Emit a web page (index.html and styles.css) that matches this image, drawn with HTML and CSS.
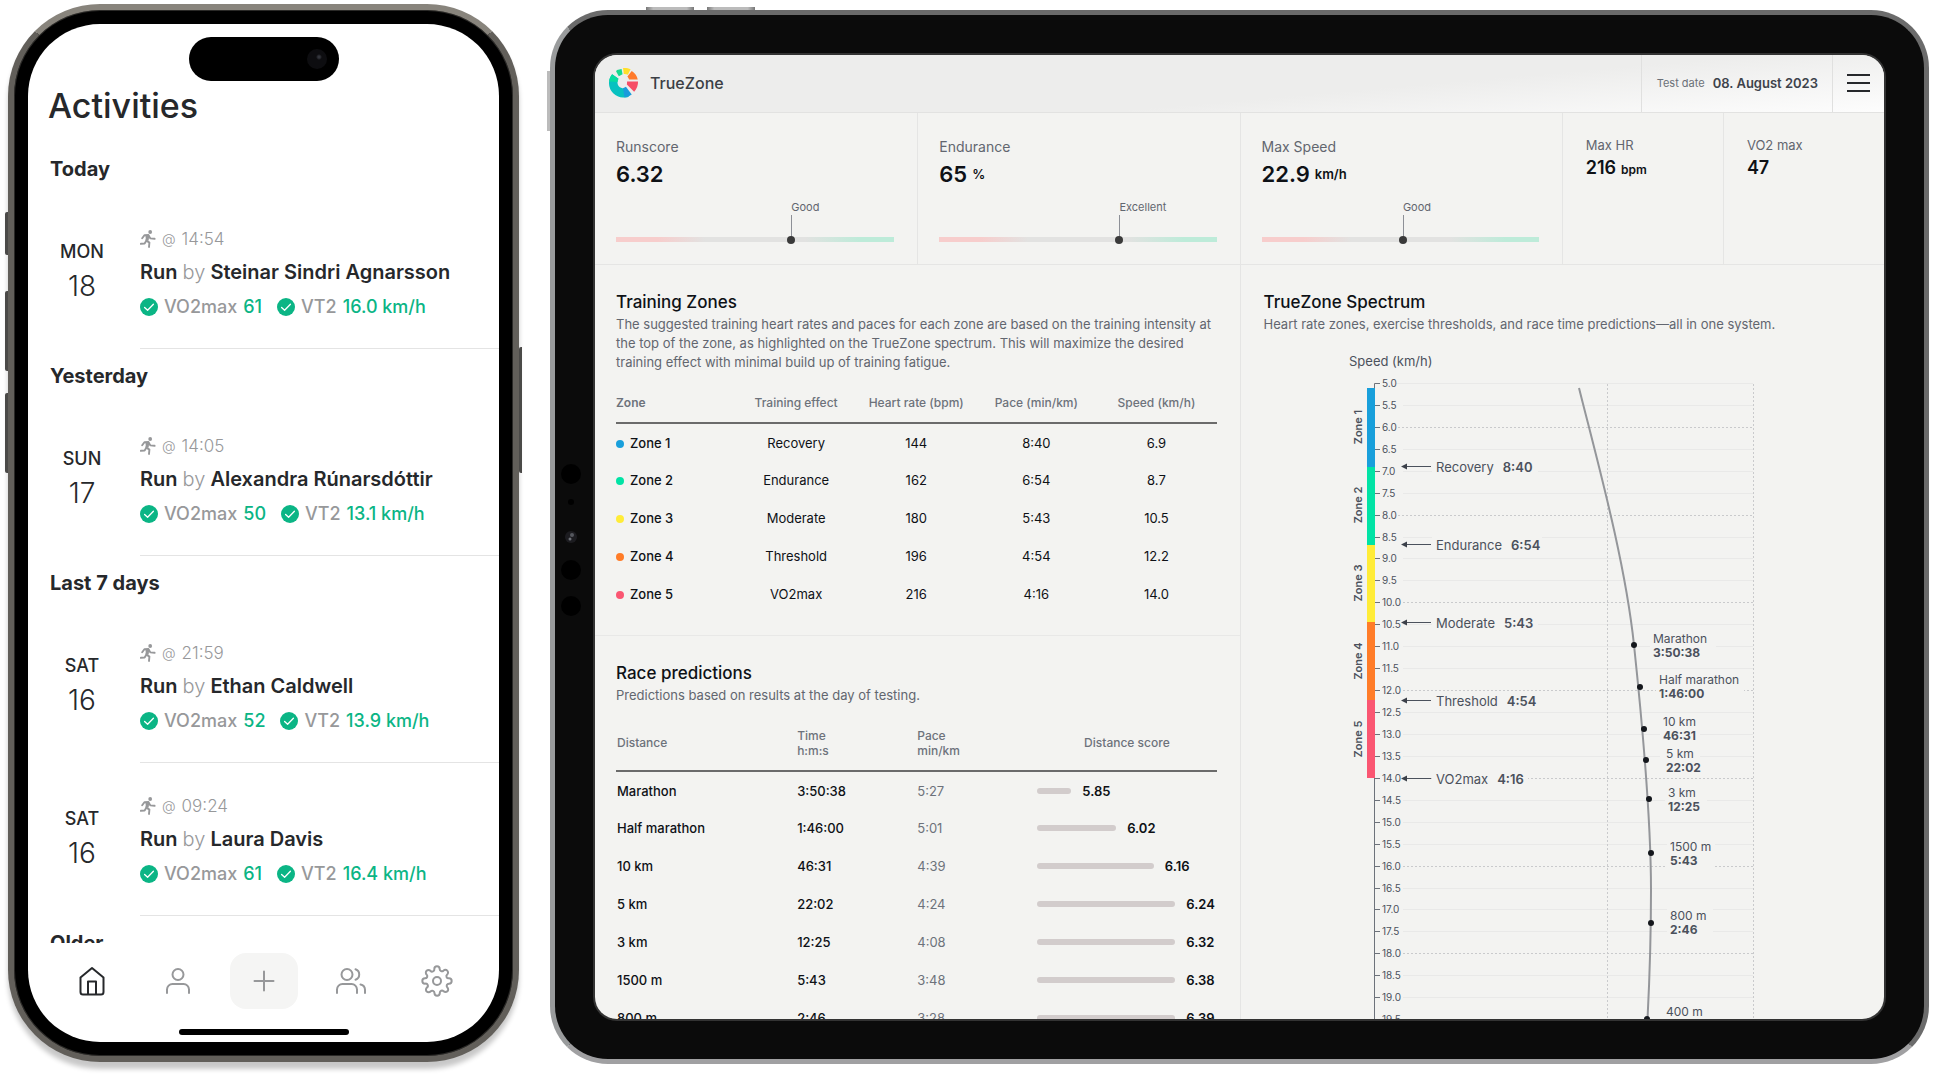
FILE: index.html
```html
<!DOCTYPE html>
<html lang="en">
<head>
<meta charset="utf-8">
<title>TrueZone</title>
<link rel="stylesheet" href="styles.css">
</head>
<body>
<svg class="defs" aria-hidden="true">
  <symbol id="runner" viewBox="0 0 16 18"><circle cx="10.2" cy="2" r="1.9" fill="currentColor"/><path d="M2.2 8.2 4.4 5.2 8.4 5 6.2 10.4 9.4 12.6 9 17M8.6 5.6 10.4 8.4 14.6 8.8M6 11.2 4.6 13.6.8 13.8" fill="none" stroke="currentColor" stroke-width="1.9" stroke-linecap="round" stroke-linejoin="round"/><path d="M5.4 5.2 9.4 5 8.6 10.4 6 10.6Z" fill="currentColor"/></symbol>
  <symbol id="check" viewBox="0 0 18 18"><circle cx="9" cy="9" r="9" fill="#0bb585"/><path d="M4.6 9.4 7.6 12.2 13.4 6.2" fill="none" stroke="#fff" stroke-width="1.3" stroke-linecap="round" stroke-linejoin="round"/></symbol>
</svg>

<main class="phone">
  <i class="key key-mute"></i><i class="key key-up"></i><i class="key key-down"></i><i class="key key-power"></i>
  <div class="phone-screen">
    <div class="island"><i class="lens"></i></div>
    <div class="feed">
      <h1>Activities</h1>
      <h2>Today</h2>
      <article class="entry">
        <div class="date"><b>MON</b><span>18</span></div>
        <div class="info">
          <p class="time"><svg class="run"><use href="#runner"/></svg><small>@</small> 14:54</p>
          <p class="name">Run <span>by</span> Steinar Sindri Agnarsson</p>
          <p class="metrics"><svg class="tick"><use href="#check"/></svg>VO2max <b>61</b><svg class="tick"><use href="#check"/></svg>VT2 <b>16.0 km/h</b></p>
        </div>
      </article>
      <h2>Yesterday</h2>
      <article class="entry">
        <div class="date"><b>SUN</b><span>17</span></div>
        <div class="info">
          <p class="time"><svg class="run"><use href="#runner"/></svg><small>@</small> 14:05</p>
          <p class="name">Run <span>by</span> Alexandra Rúnarsdóttir</p>
          <p class="metrics"><svg class="tick"><use href="#check"/></svg>VO2max <b>50</b><svg class="tick"><use href="#check"/></svg>VT2 <b>13.1 km/h</b></p>
        </div>
      </article>
      <h2>Last 7 days</h2>
      <article class="entry">
        <div class="date"><b>SAT</b><span>16</span></div>
        <div class="info">
          <p class="time"><svg class="run"><use href="#runner"/></svg><small>@</small> 21:59</p>
          <p class="name">Run <span>by</span> Ethan Caldwell</p>
          <p class="metrics"><svg class="tick"><use href="#check"/></svg>VO2max <b>52</b><svg class="tick"><use href="#check"/></svg>VT2 <b>13.9 km/h</b></p>
        </div>
      </article>
      <article class="entry">
        <div class="date"><b>SAT</b><span>16</span></div>
        <div class="info">
          <p class="time"><svg class="run"><use href="#runner"/></svg><small>@</small> 09:24</p>
          <p class="name">Run <span>by</span> Laura Davis</p>
          <p class="metrics"><svg class="tick"><use href="#check"/></svg>VO2max <b>61</b><svg class="tick"><use href="#check"/></svg>VT2 <b>16.4 km/h</b></p>
        </div>
      </article>
      <h2>Older</h2>
    </div>
    <nav class="tabs">
      <a class="active" href="#home" aria-label="Home"><svg viewBox="0 0 32 32"><path d="M4.5 12.5 16 3l11.500 9.500V27a2.500 2.500 0 0 1-2.500 2.500H7A2.500 2.500 0 0 1 4.500 27ZM12 29.500V16.500h8v13"/></svg></a>
      <a href="#profile" aria-label="Profile"><svg viewBox="0 0 32 32"><circle cx="16" cy="9.500" r="5.500"/><path d="M5 28v-3.500a5.500 5.500 0 0 1 5.500-5.500h11a5.500 5.500 0 0 1 5.500 5.500V28"/></svg></a>
      <button type="button" aria-label="Add activity"><svg viewBox="0 0 32 32"><path d="M16 6.500v19M6.500 16h19"/></svg></button>
      <a href="#groups" aria-label="Groups"><svg viewBox="0 0 32 32"><circle cx="12" cy="9.500" r="5.500"/><path d="M2 28v-3.500a5.500 5.500 0 0 1 5.500-5.500h9a5.500 5.500 0 0 1 5.500 5.500V28M20.500 4.300a5.500 5.500 0 0 1 0 10.400M25.500 19.400a5.500 5.500 0 0 1 4.500 5.300V28"/></svg></a>
      <a href="#settings" aria-label="Settings"><svg viewBox="0 0 24 24"><circle class="gear" cx="12" cy="12" r="3"/><path class="gear" d="M19.400 15a1.650 1.650 0 0 0 .33 1.820l.06.06a2 2 0 1 1-2.830 2.830l-.06-.06a1.650 1.650 0 0 0-2.800 1.180V21a2 2 0 0 1-4 0v-.09a1.650 1.650 0 0 0-2.900-1.080l-.06.06a2 2 0 1 1-2.830-2.830l.06-.06A1.650 1.650 0 0 0 3.090 14H3a2 2 0 0 1 0-4h.09a1.650 1.650 0 0 0 1.180-2.800l-.06-.06a2 2 0 1 1 2.830-2.830l.06.06A1.650 1.650 0 0 0 10 3.090V3a2 2 0 0 1 4 0v.09a1.650 1.650 0 0 0 2.800 1.180l.06-.06a2 2 0 1 1 2.830 2.830l-.06.06A1.650 1.650 0 0 0 20.910 10H21a2 2 0 0 1 0 4h-.09a1.650 1.650 0 0 0-1.510 1Z"/></svg></a>
    </nav>
    <div class="home-bar"></div>
  </div>
</main>

<section class="tablet">
  <i class="pad-key pad-a"></i><i class="pad-key pad-b"></i><i class="pad-key pad-c"></i>
  <svg class="sensors" viewBox="0 0 24 160"><g fill="#000"><circle cx="12" cy="18" r="10"/><circle cx="12" cy="46" r="3"/><circle cx="12" cy="114" r="10"/><circle cx="12" cy="150" r="10"/></g><circle cx="12" cy="81" r="6" fill="#1c1c20"/><circle cx="13" cy="79" r="2" fill="#55585e"/><circle cx="11" cy="83" r="1.500" fill="#6c6f75"/></svg>
  <div class="pad-screen">
    <header class="bar">
      <div class="brand">
        <svg class="logo" viewBox="0 0 32 32">
          <path d="M4.300 7.500A15 15 0 0 0 1 17a15 15 0 0 0 14.500 14.500c2.500 0 4-.2 6-.9L16.500 22C12 22 9.600 19 9.800 15.500c.1-1.500.5-2.500 1-3.500Z" fill="#08c1c0"/>
          <path d="M4.300 7.500C2.500 9.600 1.400 12 1.100 15l8.700.5c.1-1.500.5-2.500 1-3.500Z" fill="#08dba0"/>
          <path d="M15.500 21.900 18.500 20.500 24.500 28.500c-1.500 1.200-4 2.500-7.500 2.900Z" fill="#1a9bdc"/>
          <path d="M9.300 3 14 2l1 5.500-3.800 2L8.300 4.500Z" fill="#16d98f"/>
          <path d="M15.500 1c3-.3 5.500.2 7.800 1.300L20.500 8c-1.500-.8-2.500-.9-4.200-.8Z" fill="#ffdf2b"/>
          <path d="M24.500 4c3.500 2.200 5.500 5.300 6.200 8.800l-9 .2c-.2-1.300-.8-2.300-1.700-3.300Z" fill="#ff7a2c"/>
          <path d="M19.700 15H31c.1 4-1.300 7.700-4 10.500L19.500 18Z" fill="#f64d66"/>
        </svg>
        <span>TrueZone</span>
      </div>
      <div class="test-date"><span>Test date</span><time datetime="2023-08-08">08. August 2023</time></div>
      <button class="menu" type="button" aria-label="Menu"><i></i><i></i><i></i></button>
    </header>

    <div class="stats">
      <div class="stat"><p>Runscore</p><strong>6.32</strong>
        <div class="gauge"><div class="mark" style="left:63%"><span>Good</span></div></div></div>
      <div class="stat"><p>Endurance</p><strong>65 <small>%</small></strong>
        <div class="gauge"><div class="mark" style="left:65%"><span>Excellent</span></div></div></div>
      <div class="stat"><p>Max Speed</p><strong>22.9 <small>km/h</small></strong>
        <div class="gauge"><div class="mark" style="left:51%"><span>Good</span></div></div></div>
      <div class="stat compact"><p>Max HR</p><strong>216 <small>bpm</small></strong></div>
      <div class="stat compact"><p>VO2 max</p><strong>47</strong></div>
    </div>

    <div class="panels">
      <div class="left">
        <section class="panel">
          <h3>Training Zones</h3>
          <p class="lead">The suggested training heart rates and paces for each zone are based on the training intensity at the top of the zone, as highlighted on the TrueZone spectrum. This will maximize the desired training effect with minimal build up of training fatigue.</p>
          <table class="zones">
            <thead><tr><th>Zone</th><th>Training effect</th><th>Heart rate (bpm)</th><th>Pace (min/km)</th><th>Speed (km/h)</th></tr></thead>
            <tbody>
              <tr><td><i class="dot z1"></i>Zone 1</td><td>Recovery</td><td>144</td><td>8:40</td><td>6.9</td></tr>
              <tr><td><i class="dot z2"></i>Zone 2</td><td>Endurance</td><td>162</td><td>6:54</td><td>8.7</td></tr>
              <tr><td><i class="dot z3"></i>Zone 3</td><td>Moderate</td><td>180</td><td>5:43</td><td>10.5</td></tr>
              <tr><td><i class="dot z4"></i>Zone 4</td><td>Threshold</td><td>196</td><td>4:54</td><td>12.2</td></tr>
              <tr><td><i class="dot z5"></i>Zone 5</td><td>VO2max</td><td>216</td><td>4:16</td><td>14.0</td></tr>
            </tbody>
          </table>
        </section>
        <section class="panel">
          <h3>Race predictions</h3>
          <p class="lead">Predictions based on results at the day of testing.</p>
          <table class="races">
            <colgroup><col class="w30"><col class="w20"><col class="w20"><col class="w30"></colgroup>
            <thead><tr><th>Distance</th><th>Time<br>h:m:s</th><th>Pace<br>min/km</th><th>Distance score</th></tr></thead>
            <tbody>
              <tr><td>Marathon</td><td>3:50:38</td><td>5:27</td><td><div class="score"><i style="width:19%"></i>5.85</div></td></tr>
              <tr><td>Half marathon</td><td>1:46:00</td><td>5:01</td><td><div class="score"><i style="width:44%"></i>6.02</div></td></tr>
              <tr><td>10 km</td><td>46:31</td><td>4:39</td><td><div class="score"><i style="width:65%"></i>6.16</div></td></tr>
              <tr><td>5 km</td><td>22:02</td><td>4:24</td><td><div class="score"><i style="width:77%"></i>6.24</div></td></tr>
              <tr><td>3 km</td><td>12:25</td><td>4:08</td><td><div class="score"><i style="width:77%"></i>6.32</div></td></tr>
              <tr><td>1500 m</td><td>5:43</td><td>3:48</td><td><div class="score"><i style="width:77%"></i>6.38</div></td></tr>
              <tr><td>800 m</td><td>2:46</td><td>3:28</td><td><div class="score"><i style="width:77%"></i>6.39</div></td></tr>
            </tbody>
          </table>
        </section>
      </div>

      <section class="panel right">
        <h3>TrueZone Spectrum</h3>
        <p class="lead">Heart rate zones, exercise thresholds, and race time predictions—all in one system.</p>
        <svg class="chart" viewBox="1340 346 430 700" role="img" aria-label="Speed spectrum">
          <text class="axis-title" x="1349" y="366">Speed (km/h)</text>
          <path class="grid" d="M1396 383.500H1753M1403 405.500H1753M1403 449.500H1753M1403 471.500H1753M1403 493.500H1753M1403 537.500H1753M1403 558.500H1753M1403 580.500H1753M1403 624.500H1753M1403 646.500H1753M1403 668.500H1753M1403 712.500H1753M1403 734.500H1753M1403 756.500H1753M1403 800.500H1753M1403 822.500H1753M1403 844.500H1753M1403 888.500H1753M1403 909.500H1753M1403 931.500H1753M1403 975.500H1753M1403 997.500H1753M1403 1019.500H1753"/>
          <path class="dashed" d="M1398 427.500H1753M1398 515.500H1753M1403 602.500H1753M1403 690.500H1753M1403 778.500H1753M1403 866.500H1753M1403 953.500H1753M1607.500 384V1046M1753.500 384V1046"/>
          <path class="axis" d="M1374.500 1046V383.500H1380M1375 405.500h5M1375 427.500h5M1375 449.500h5M1375 471.500h5M1375 493.500h5M1375 515.500h5M1375 537.500h5M1375 558.500h5M1375 580.500h5M1375 602.500h5M1375 624.500h5M1375 646.500h5M1375 668.500h5M1375 690.500h5M1375 712.500h5M1375 734.500h5M1375 756.500h5M1375 778.500h5M1375 800.500h5M1375 822.500h5M1375 844.500h5M1375 866.500h5M1375 888.500h5M1375 909.500h5M1375 931.500h5M1375 953.500h5M1375 975.500h5M1375 997.500h5M1375 1019.500h5"/>
          <g class="scale">
            <text x="1382" y="387">5.0</text><text x="1382" y="409">5.5</text><text x="1382" y="431">6.0</text><text x="1382" y="453">6.5</text><text x="1382" y="475">7.0</text><text x="1382" y="497">7.5</text><text x="1382" y="519">8.0</text><text x="1382" y="541">8.5</text><text x="1382" y="562">9.0</text><text x="1382" y="584">9.5</text><text x="1382" y="606">10.0</text><text x="1382" y="628">10.5</text><text x="1382" y="650">11.0</text><text x="1382" y="672">11.5</text><text x="1382" y="694">12.0</text><text x="1382" y="716">12.5</text><text x="1382" y="738">13.0</text><text x="1382" y="760">13.5</text><text x="1382" y="782">14.0</text><text x="1382" y="804">14.5</text><text x="1382" y="826">15.0</text><text x="1382" y="848">15.5</text><text x="1382" y="870">16.0</text><text x="1382" y="892">16.5</text><text x="1382" y="913">17.0</text><text x="1382" y="935">17.5</text><text x="1382" y="957">18.0</text><text x="1382" y="979">18.5</text><text x="1382" y="1001">19.0</text><text x="1382" y="1023">19.5</text>
          </g>
          <rect x="1367" y="388" width="8" height="79" fill="#189fdb"/>
          <rect x="1367" y="467" width="8" height="78" fill="#00e3a5"/>
          <rect x="1367" y="545" width="8" height="77" fill="#ffec38"/>
          <rect x="1367" y="622" width="8" height="78" fill="#ff7c28"/>
          <rect x="1367" y="700" width="8" height="78" fill="#fa5672"/>
          <g class="zone-names">
            <text transform="translate(1362 427) rotate(-90)">Zone 1</text>
            <text transform="translate(1362 505) rotate(-90)">Zone 2</text>
            <text transform="translate(1362 583) rotate(-90)">Zone 3</text>
            <text transform="translate(1362 661) rotate(-90)">Zone 4</text>
            <text transform="translate(1362 739) rotate(-90)">Zone 5</text>
          </g>
          <path class="knockout" d="M1432 458h106v18h-106zM1432 536h110v18h-110zM1432 614h106v18h-106zM1432 692h108v18h-108zM1432 770h96v18h-96zM1650 630h66v30h-66zM1656 672h88v30h-88zM1660 713h40v62h-40zM1665 784h42v30h-42zM1667 838h48v30h-48zM1667 908h46v30h-46zM1663 1005h46v30h-46z"/>
          <path class="arrow" d="M1406 466.500H1431M1406 544.500H1431M1406 622.500H1431M1406 700.500H1431M1406 778.500H1431"/>
          <path class="tip" d="M1401 466.500l6-3v6zM1401 544.500l6-3v6zM1401 622.500l6-3v6zM1401 700.500l6-3v6zM1401 778.500l6-3v6z"/>
          <g class="effects">
            <text x="1436" y="472">Recovery<tspan dx="9">8:40</tspan></text>
            <text x="1436" y="550">Endurance<tspan dx="9">6:54</tspan></text>
            <text x="1436" y="628">Moderate<tspan dx="9">5:43</tspan></text>
            <text x="1436" y="706">Threshold<tspan dx="9">4:54</tspan></text>
            <text x="1436" y="784">VO2max<tspan dx="9">4:16</tspan></text>
          </g>
          <path class="curve" d="M1579 388C1597 460 1625 560 1634 645C1643 730 1651 820 1651 890C1651 940 1650 980 1646 1046"/>
          <g class="marks"><circle cx="1634" cy="645" r="3"/><circle cx="1640" cy="687" r="3"/><circle cx="1644" cy="729" r="3"/><circle cx="1646" cy="760" r="3"/><circle cx="1649" cy="799" r="3"/><circle cx="1651" cy="853" r="3"/><circle cx="1651" cy="923" r="3"/><circle cx="1647" cy="1019" r="3"/></g>
          <g class="events">
            <text x="1653" y="643">Marathon<tspan x="1653" dy="14">3:50:38</tspan></text>
            <text x="1659" y="684">Half marathon<tspan x="1659" dy="14">1:46:00</tspan></text>
            <text x="1663" y="726">10 km<tspan x="1663" dy="14">46:31</tspan></text>
            <text x="1666" y="758">5 km<tspan x="1666" dy="14">22:02</tspan></text>
            <text x="1668" y="797">3 km<tspan x="1668" dy="14">12:25</tspan></text>
            <text x="1670" y="851">1500 m<tspan x="1670" dy="14">5:43</tspan></text>
            <text x="1670" y="920">800 m<tspan x="1670" dy="14">2:46</tspan></text>
            <text x="1666" y="1016">400 m</text>
          </g>
        </svg>
      </section>
    </div>
  </div>
</section>
</body>
</html>
```
FILE: styles.css
```css
* { box-sizing: border-box; }
body {
  margin: 0;
  height: 100vh;
  padding: 4px 14px 10px 8px;
  display: grid;
  grid-template-columns: minmax(0, 511fr) minmax(0, 1379fr);
  grid-template-rows: minmax(0, 1fr);
  column-gap: 31px;
  background: #fff;
  color: #26282b;
  font-family: Inter, "Liberation Sans", sans-serif;
  overflow: hidden;
}
h1, h2, h3, p { margin: 0; }
button { border: 0; padding: 0; background: none; }
.defs { position: absolute; width: 0; height: 0; }

/* Phone */
.phone {
  position: relative;
  margin-bottom: 2px;
  padding: 14px;
  border: 6px solid #625f5a;
  border-top-color: #88847c;
  border-radius: 92px;
  background: #000;
  box-shadow: inset 0 0 0 1px #2a2927, 0 7px 5px rgba(0, 0, 0, .22);
}
.key {
  position: absolute;
  left: -9px;
  width: 3px;
  background: #4b4a48;
  border-radius: 2px 0 0 2px;
}
.key-mute { top: 202px; height: 43px; }
.key-up { top: 281px; height: 80px; }
.key-down { top: 383px; height: 80px; }
.key-power { top: 337px; height: 126px; left: auto; right: -9px; }
.phone-screen {
  position: relative;
  height: 100%;
  display: flex;
  flex-direction: column;
  background: #fff;
  border-radius: 72px;
  overflow: hidden;
}
.island {
  position: absolute;
  top: 13px;
  left: 50%;
  width: 150px;
  height: 44px;
  margin-left: -75px;
  border-radius: 22px;
  background: #000;
}
.lens {
  position: absolute;
  right: 12px;
  top: 12px;
  width: 20px;
  height: 20px;
  border-radius: 50%;
  background: radial-gradient(circle at 60% 40%, #33353c 0 1px, #0d0d10 3px);
}
.feed { flex: 1; min-height: 0; overflow: hidden; padding-top: 62px; }
.feed h1 { font-size: 34px; line-height: 40px; font-weight: 500; padding: 0 20px 16px; }
.feed h2 { font-size: 20px; line-height: 54px; font-weight: 700; padding-left: 22px; }
.entry { display: grid; grid-template-columns: 108px minmax(0, 1fr); column-gap: 4px; }
.date { display: flex; flex-direction: column; align-items: center; gap: 5px; padding-top: 45px; }
.date b { font-size: 18px; line-height: 22px; font-weight: 500; }
.date span { font-size: 28px; line-height: 36px; font-weight: 300; }
.info { padding: 29px 0 25px; border-bottom: 1px solid #e4e4e4; white-space: nowrap; }
.time { display: flex; align-items: center; gap: 6px; font-size: 17px; line-height: 28px; font-weight: 300; color: #97989a; }
.time small { font-size: 14px; }
.run { width: 16px; height: 18px; }
.name { font-size: 20px; line-height: 38px; font-weight: 600; }
.name span { font-weight: 300; color: #97989a; }
.metrics { display: flex; align-items: center; gap: 6px; font-size: 18px; line-height: 32px; font-weight: 500; color: #97989a; }
.metrics b { color: #0bb585; font-weight: 500; margin-right: 9px; }
.tick { width: 18px; height: 18px; }
.tabs {
  display: grid;
  grid-template-columns: repeat(5, 1fr);
  align-items: center;
  justify-items: center;
  padding: 10px 19px 0 21px;
}
.tabs a { display: flex; color: #97989a; }
.tabs .active { color: #26282b; }
.tabs svg { width: 32px; height: 32px; fill: none; stroke: currentColor; stroke-width: 2; stroke-linecap: round; stroke-linejoin: round; }
.tabs .gear { stroke-width: 1.5; }
.tabs button { display: grid; place-items: center; width: 68px; height: 56px; border-radius: 16px; background: #f5f5f4; color: #97989a; }
.home-bar { width: 170px; height: 6px; margin: 20px auto 7px; border-radius: 3px; background: #000; }

/* Tablet */
.tablet {
  position: relative;
  margin-top: 6px;
  padding: 40px;
  border: 5px solid #6b6b6b;
  border-left-color: #999b9c;
  border-bottom-color: #a0a0a2;
  border-radius: 58px;
  background: #0b0b0b;
}
.pad-key { position: absolute; background: linear-gradient(90deg, #777, #bbb 15%, #bbb 85%, #777); }
.pad-a { top: -8px; left: 91px; width: 48px; height: 3px; }
.pad-b { top: -8px; left: 152px; width: 48px; height: 3px; }
.pad-c { top: 56px; left: -8px; width: 3px; height: 60px; }
.sensors { position: absolute; left: 4px; top: 441px; width: 24px; height: 160px; }
.pad-screen {
  height: 100%;
  display: flex;
  flex-direction: column;
  overflow: hidden;
  border-radius: 22px;
  background: #f3f3f1;
  box-shadow: 0 0 0 2px #333;
  color: #0e1116;
}
.bar {
  display: flex;
  flex: none;
  height: 58px;
  border-bottom: 1px solid #e2e2e1;
  background: linear-gradient(175deg, #ededec 60%, #fdfdfd);
}
.brand, .test-date, .menu { padding-bottom: 2px; }
.brand { flex: 1; display: flex; align-items: center; gap: 11px; padding-left: 13px; font-size: 16px; font-weight: 500; color: #3b3f45; }
.logo { width: 31px; height: 31px; }
.test-date { display: flex; align-items: center; gap: 8px; padding-left: 15px; padding-right: 14px; border-left: 1px solid #e0e0df; color: #6b7078; font-size: 11px; }
.test-date time { font-size: 13px; font-weight: 600; color: #3e434b; }
.menu { display: flex; flex-direction: column; justify-content: center; align-items: center; gap: 6px; width: 52px; border-left: 1px solid #e0e0df; }
.menu i { width: 23px; height: 2px; background: #26282b; }

.stats { display: grid; grid-template-columns: 2fr 2fr 2fr 1fr 1fr; flex: none; height: 152px; border-bottom: 1px solid #e5e5e4; }
.stat { display: flex; flex-direction: column; padding: 24px 23px 22px 21px; border-left: 1px solid #e5e5e4; }
.stat:first-child { border-left: 0; }
.stat p { font-size: 14px; line-height: 20px; color: #62666f; }
.stat strong { font-size: 22px; line-height: 34px; font-weight: 600; display: flex; align-items: center; gap: 5px; }
.stat small { font-size: 13px; font-weight: 600; }
.stat.compact { padding-left: 23px; }
.compact p { font-size: 13px; line-height: 16px; }
.compact strong { font-size: 18px; line-height: 30px; align-items: baseline; }
.compact small { font-size: 12px; }
.gauge { position: relative; height: 5px; margin-top: auto; background: linear-gradient(90deg, #f7cdcc 15%, #e2e2e1 32% 68%, #bdebd9 88%); }
.mark { position: absolute; bottom: 0; height: 27px; border-left: 1px solid #8d9097; }
.mark::after { content: ""; position: absolute; left: -5px; bottom: -2px; width: 8px; height: 8px; border-radius: 50%; background: #3a3a3a; }
.mark span { position: absolute; bottom: 27px; left: -1px; font-size: 11px; line-height: 16px; color: #62666f; }

.panels { display: grid; grid-template-columns: 1fr 1fr; flex: 1; min-height: 0; }
.panel { padding: 24px 23px 22px 21px; }
.left .panel:first-child { border-bottom: 1px solid #e8e8e7; }
.right { border-left: 1px solid #e5e5e4; padding-left: 23px; }
.panel h3 { font-size: 17px; line-height: 26px; font-weight: 500; }
.lead { font-size: 13px; line-height: 19px; color: #62666f; }
table { width: 100%; margin-top: 10px; table-layout: fixed; border-collapse: separate; border-spacing: 0; font-size: 13px; }
th { padding: 0; border-bottom: 2px solid #6b6b6b; font-size: 12px; line-height: 15px; font-weight: 500; color: #6d727b; text-align: left; }
td { padding: 0; height: 38px; }
tbody tr:first-child td { height: 37px; }
.zones th { height: 42px; text-align: center; }
.zones td { text-align: center; }
.zones th:first-child { font-weight: 600; }
.zones th:first-child, .zones td:first-child { text-align: left; }
.zones td:first-child, .races td:first-child, .races td:nth-child(2) { font-weight: 500; }
.dot { display: inline-block; width: 8px; height: 8px; margin-right: 6px; border-radius: 50%; }
.z1 { background: #189fdb; }
.z2 { background: #00e3a5; }
.z3 { background: #ffec38; }
.z4 { background: #ff7c28; }
.z5 { background: #fa5672; }
.races th, .races td { padding-left: 1px; }
.races th { height: 57px; }
.races th:last-child { text-align: center; }
.races td:nth-child(3) { color: #6d727b; }
.w30 { width: 30%; }
.w20 { width: 20%; }
.score { display: flex; align-items: center; gap: 11px; font-weight: 600; }
.score i { height: 6px; border-radius: 3px; background: #d2cccc; }

/* Spectrum chart */
.chart { display: block; width: 430px; height: 700px; margin: 12px 0 0 76px; }
.chart text { fill: #4b515c; }
.axis-title, .effects { font-size: 13px; }
.chart tspan { font-weight: 600; }
.events { font-size: 12px; }
.events tspan { font-weight: 700; }
.scale { font-size: 10px; }
.zone-names { font-size: 11px; font-weight: 600; text-anchor: middle; }
.grid { stroke: #e9e9e8; fill: none; }
.dashed { stroke: #c9cacc; stroke-dasharray: 2 2; fill: none; }
.axis { stroke: #6d727b; fill: none; }
.knockout { fill: #f3f3f1; }
.arrow { stroke: #4b515c; }
.tip { fill: #3b4049; }
.curve { fill: none; stroke: #94969a; stroke-width: 2; }
.marks { fill: #14171c; }
```
